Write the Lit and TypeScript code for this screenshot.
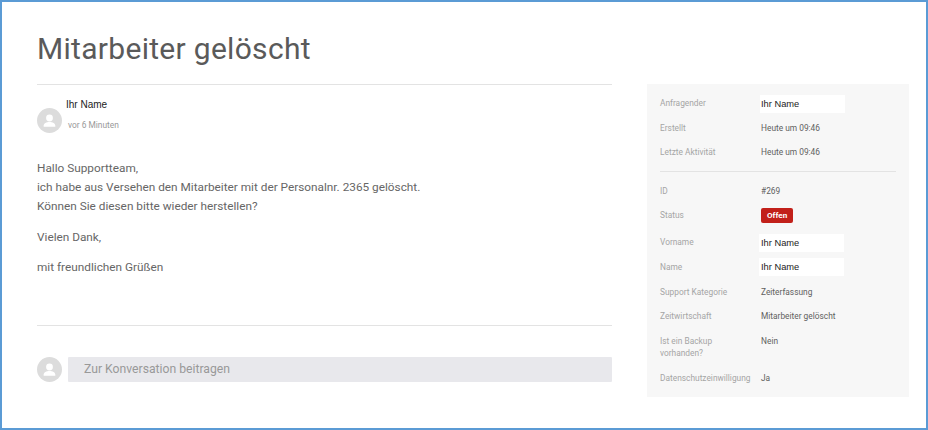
import { LitElement, html, css, svg } from "lit";
import { customElement } from "lit/decorators.js";

const avatar = html`<svg class="avatar" viewBox="0 0 25 25" aria-hidden="true">
  <circle cx="12.5" cy="12.5" r="12.5" fill="#dcdcdc"></circle>
  ${svg`<circle cx="12.5" cy="10" r="3.4" fill="#fff"></circle>
  <path d="M6.6 18.2c0-3 2.8-4.2 5.9-4.2s5.9 1.2 5.9 4.2c0 .4-.3.6-.7.6H7.3c-.4 0-.7-.2-.7-.6z" fill="#fff"></path>`}
</svg>`;

@customElement("app-root")
export class AppRoot extends LitElement {
  static styles = css`
    :host {
      display: block;
      width: 928px;
      height: 430px;
      box-sizing: border-box;
      border: 2px solid #5b9bd5;
      background: #fff;
      font-family: Roboto, "Noto Sans", sans-serif;
      color: #555;
      overflow: hidden;
    }
    .page {
      padding: 0 17px 0 35px;
    }
    h1 {
      margin: 0;
      height: 82px;
      padding-top: 27px;
      box-sizing: border-box;
      font-size: 30px;
      line-height: 40px;
      font-weight: 400;
      color: #5a5a5a;
      letter-spacing: 0.3px;
    }
    .cols {
      display: flex;
      gap: 35px;
      align-items: flex-start;
    }
    .main {
      width: 575px;
      flex: none;
      border-top: 1px solid #e3e3e3;
    }
    .meta {
      height: 64px;
      position: relative;
      display: flex;
      gap: 6px;
      padding-top: 23px;
      box-sizing: border-box;
    }
    .avatar {
      width: 25px;
      height: 25px;
      flex: none;
      display: block;
    }
    .who {
      margin-top: -9px;
      margin-left: -2px;
    }
    .author {
      font-family: "Liberation Sans", sans-serif;
      font-size: 10px;
      line-height: 12px;
      color: #222;
    }
    .time {
      font-size: 8.4px;
      line-height: 12px;
      margin: 8px 0 0 2px;
      color: #999;
    }
    .body {
      height: 177px;
      box-sizing: border-box;
      border-bottom: 1px solid #e3e3e3;
      font-size: 11.8px;
      line-height: 19px;
      color: #666;
      padding-top: 10px;
    }
    .body p {
      margin: 0 0 11.5px;
    }
    .reply {
      display: flex;
      gap: 6px;
      align-items: center;
      padding-top: 31px;
    }
    .reply .input {
      flex: 1;
      height: 25px;
      box-sizing: border-box;
      background: #e8e8ec;
      border-radius: 1px;
      padding-left: 16px;
      font-size: 12.2px;
      line-height: 25px;
      color: #999;
    }
    .side {
      width: 262px;
      height: 313px;
      flex: none;
      box-sizing: border-box;
      background: #f7f7f7;
      padding: 7px 13px 0 13px;
      font-size: 8.35px;
      color: #5f5f5f;
    }
    .row {
      display: grid;
      grid-template-columns: 101px 1fr;
      height: 24.6px;
      line-height: 24px;
    }
    .row .k {
      color: #a5a5a5;
    }
    .row.status {
      height: 27px;
    }
    .row.tall {
      height: 37px;
    }
    .row.tall .k {
      line-height: 12.5px;
      padding-top: 6px;
    }
    .row.tall .v {
      line-height: 24px;
    }
    .rule {
      height: 1px;
      background: #e3e3e3;
      margin: 6px 0 7px;
    }
    .field {
      width: 85px;
      height: 18px;
      margin: 4px 0 0 -1px;
      padding-left: 1px;
      box-sizing: border-box;
      background: #fff;
      font-family: "Liberation Sans", sans-serif;
      font-size: 9.3px;
      line-height: 18px;
      color: #222;
    }
    .field.shift {
      margin-left: -2px;
      margin-top: 3.5px;
      padding-left: 2px;
    }
    .badge {
      display: inline-block;
      height: 15px;
      line-height: 15px;
      padding: 0 6px;
      background: #c2201a;
      border-radius: 2px;
      color: #fff;
      font-weight: 700;
      font-size: 8.1px;
      margin-top: 5px;
      vertical-align: top;
    }
  `;

  private row(k: string, v: unknown, cls = "row") {
    return html`<div class=${cls}><span class="k">${k}</span><span class="v">${v}</span></div>`;
  }

  render() {
    const field = html`<div class="field">Ihr Name</div>`;
    const shifted = html`<div class="field shift">Ihr Name</div>`;
    return html`<div class="page">
      <h1>Mitarbeiter gelöscht</h1>
      <div class="cols">
        <div class="main">
          <div class="meta">
            ${avatar}
            <div class="who">
              <div class="author">Ihr Name</div>
              <div class="time">vor 6 Minuten</div>
            </div>
          </div>
          <div class="body">
            <p>Hallo Supportteam,<br />ich habe aus Versehen den Mitarbeiter mit der Personalnr. 2365 gelöscht.<br />Können Sie diesen bitte wieder herstellen?</p>
            <p>Vielen Dank,</p>
            <p>mit freundlichen Grüßen</p>
          </div>
          <div class="reply">
            ${avatar}
            <div class="input">Zur Konversation beitragen</div>
          </div>
        </div>
        <aside class="side">
          ${this.row("Anfragender", field)}
          ${this.row("Erstellt", "Heute um 09:46")}
          ${this.row("Letzte Aktivität", "Heute um 09:46")}
          <div class="rule"></div>
          ${this.row("ID", "#269")}
          ${this.row("Status", html`<span class="badge">Offen</span>`, "row status")}
          ${this.row("Vorname", shifted)}
          ${this.row("Name", shifted)}
          ${this.row("Support Kategorie", "Zeiterfassung")}
          ${this.row("Zeitwirtschaft", "Mitarbeiter gelöscht")}
          <div class="row tall"><span class="k">Ist ein Backup<br />vorhanden?</span><span class="v">Nein</span></div>
          ${this.row("Datenschutzeinwilligung", "Ja")}
        </aside>
      </div>
    </div>`;
  }
}
